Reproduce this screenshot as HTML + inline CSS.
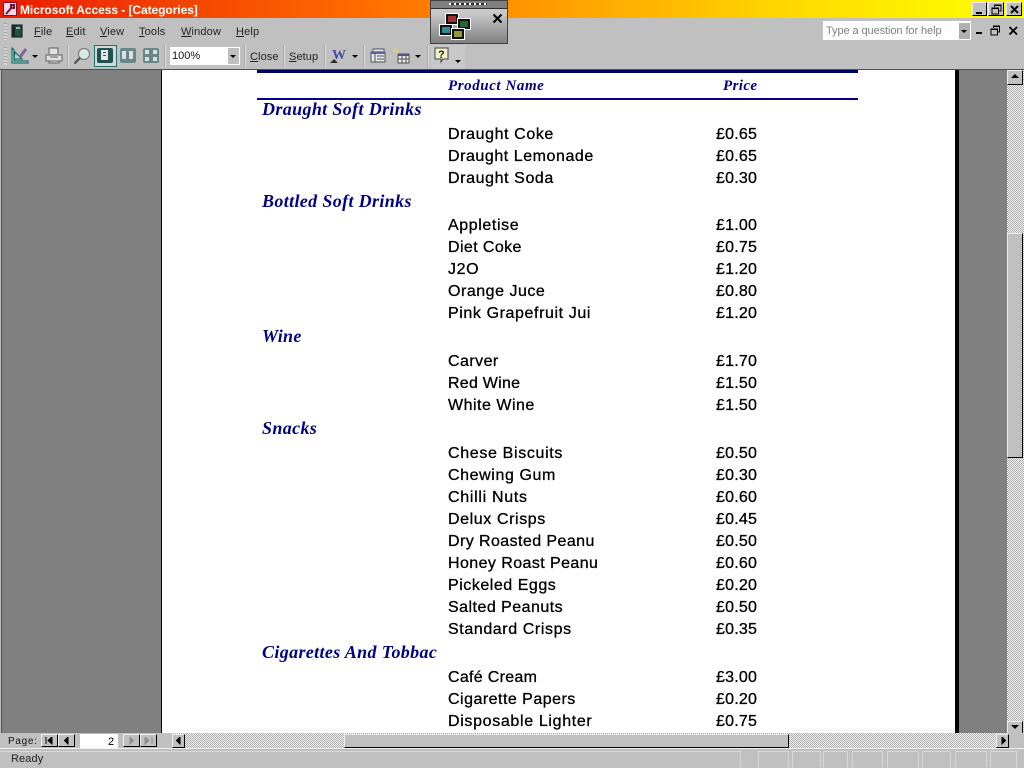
<!DOCTYPE html>
<html><head><meta charset="utf-8"><style>
html,body{margin:0;padding:0;width:1024px;height:768px;overflow:hidden;background:#c0c0c0}
body{position:relative;font-family:"Liberation Sans",sans-serif}
.a{position:absolute}
.t{position:absolute;white-space:nowrap;line-height:1}
.i{font:16px "Liberation Sans",sans-serif;color:#000;letter-spacing:.6px;left:448px;-webkit-text-stroke:.3px #000}
.p{font:16px "Liberation Sans",sans-serif;color:#000;letter-spacing:.2px;left:716px;-webkit-text-stroke:.3px #000}
.h{font:italic bold 18px "Liberation Serif",serif;color:#000080;left:262px;letter-spacing:.36px;margin-top:-1px}
.m{font:11px "Liberation Sans",sans-serif;color:#222;top:26px;letter-spacing:.15px}
.m u,.b u{text-decoration:underline}
.b{font:11px "Liberation Sans",sans-serif;color:#222;top:51px;letter-spacing:.1px}
.sep{position:absolute;top:45px;width:1px;height:22px;background:#a8a8a8;box-shadow:1px 0 #dcdcdc}
.btn{position:absolute;background:#c0c0c0;border:1px solid;border-color:#eee #000 #000 #eee;box-sizing:border-box}
.dither{background-color:#e0e0e0;background-image:repeating-conic-gradient(#b0b0b0 0 25%,#f0f0f0 0 50%);background-size:2px 2px}
.st{position:absolute;top:751px;height:17px;border:1px solid;border-color:#d8d8d8 #d8d8d8 transparent transparent;box-sizing:border-box}
.v{position:absolute;background:#d8e0e0}
</style></head><body>

<div class="a" style="left:0;top:0;width:1024px;height:18px;background:linear-gradient(90deg,#e81c00 0,#ff6a00 35%,#ffa800 58%,#ffe000 80%,#ffff00 100%)"></div>
<svg class="a" style="left:3px;top:2px" width="14" height="14"><rect width="14" height="14" fill="#801030"/><rect x="1" y="1" width="12" height="12" fill="#f4d8e8"/><path d="M3 12 L9 5 M8 3 h3 v3 h-3z" stroke="#801030" stroke-width="2" fill="none"/></svg>
<div class="t" style="left:20px;top:3px;font:bold 12px 'Liberation Sans',sans-serif;color:#fff;letter-spacing:-.06px">Microsoft Access - [Categories]</div>
<div class="btn" style="left:972px;top:2px;width:15px;height:14px"><div class="a" style="left:3px;top:9px;width:6px;height:2px;background:#000"></div></div>
<div class="btn" style="left:988px;top:2px;width:16px;height:14px"><svg class="a" style="left:2px;top:1px" width="11" height="11"><path d="M3.500 3V1H10V7H7.500M1 4H7.500V10H1Z M3 1.500H10 M1 4.500H7.500" stroke="#000" fill="none"/></svg></div>
<div class="btn" style="left:1006px;top:2px;width:16px;height:14px"><svg class="a" style="left:2px;top:1px" width="11" height="11"><path d="M2 2L9 9M9 2L2 9" stroke="#000" stroke-width="2" fill="none"/></svg></div>

<div class="a" style="left:0;top:18px;width:1024px;height:51px;background:#c0c0c0"></div>
<div class="a" style="left:4px;top:23px;width:3px;height:17px;background:repeating-linear-gradient(#a8a8a8 0 1px,#d4d4d4 1px 3px)"></div>
<div class="a" style="left:4px;top:47px;width:3px;height:18px;background:repeating-linear-gradient(#a8a8a8 0 1px,#d4d4d4 1px 3px)"></div>
<svg class="a" style="left:11px;top:24px" width="12" height="14"><rect x="1" y="1" width="10" height="12" fill="#205040" stroke="#101010"/><path d="M3 2V12" stroke="#000"/><rect x="5" y="3" width="4" height="2" fill="#80c0a0"/></svg>
<div class="t m" style="left:34px"><u>F</u>ile</div>
<div class="t m" style="left:66px"><u>E</u>dit</div>
<div class="t m" style="left:100px"><u>V</u>iew</div>
<div class="t m" style="left:139px"><u>T</u>ools</div>
<div class="t m" style="left:181px"><u>W</u>indow</div>
<div class="t m" style="left:236px"><u>H</u>elp</div>

<div class="a" style="left:823px;top:21px;width:148px;height:19px;background:#fff"></div>
<div class="a" style="left:959px;top:23px;width:11px;height:16px;background:#b0b0b0"></div>
<div class="a" style="left:961px;top:30px;border:3px solid transparent;border-top:3px solid #000"></div>
<div class="t" style="left:826px;top:25px;font:11px 'Liberation Sans',sans-serif;color:#808080;letter-spacing:-.08px">Type a question for help</div>
<div class="a" style="left:976px;top:32px;width:6px;height:2px;background:#000"></div>
<svg class="a" style="left:990px;top:25px" width="11" height="11"><path d="M3.500 3V1H9.500V7H7.500M1 4H7.500V10H1Z M3 1.500H10 M1 4.500H7.500" stroke="#000" fill="none"/></svg>
<svg class="a" style="left:1008px;top:25px" width="11" height="11"><path d="M1.500 2L9 9.500M9 2L1.500 9.500" stroke="#000" stroke-width="1.800" fill="none"/></svg>

<svg class="a" style="left:11px;top:47px" width="18" height="18"><path d="M1 16H17V14H3V3L1 1Z M3 12L11 12 4 5Z" fill="#a8d8c8" stroke="#006060"/><path d="M9 10L15 2" stroke="#8060a0" stroke-width="3"/></svg>
<div class="a" style="left:32px;top:55px;border:3px solid transparent;border-top:3px solid #000"></div>
<svg class="a" style="left:45px;top:47px" width="18" height="17"><path d="M4 7V1H13V7M1 8H17V14H1ZM4 14V16H14V14M5 10H13" stroke="#606060" fill="#e0e0e0"/></svg>
<div class="sep" style="left:67px"></div>
<svg class="a" style="left:73px;top:47px" width="18" height="18"><circle cx="11" cy="7" r="5.500" fill="#d8e8e8" stroke="#707070"/><path d="M7 11L1.500 16.500" stroke="#505050" stroke-width="2.200"/></svg>

<div class="a" style="left:94px;top:45px;width:23px;height:22px;background:#d4d8d4;border:1px solid #207070;box-sizing:border-box"></div>
<div class="a" style="left:97px;top:48px;width:16px;height:15px;background:#205050;border-radius:2px"></div>
<div class="a" style="left:101px;top:50px;width:7px;height:10px;background:#e8e8e8"></div>
<div class="a" style="left:103px;top:52px;width:3px;height:1px;background:#206060"></div>
<div class="a" style="left:103px;top:55px;width:3px;height:1px;background:#206060"></div>

<div class="a" style="left:120px;top:48px;width:16px;height:15px;background:#688888;border-radius:2px"></div>
<div class="v" style="left:122px;top:51px;width:4px;height:8px"></div>
<div class="v" style="left:129px;top:51px;width:4px;height:8px"></div>
<div class="a" style="left:143px;top:48px;width:16px;height:15px;background:#688888;border-radius:2px"></div>
<div class="v" style="left:145px;top:50px;width:4px;height:4px"></div>
<div class="v" style="left:153px;top:50px;width:4px;height:4px"></div>
<div class="v" style="left:145px;top:57px;width:4px;height:4px"></div>
<div class="v" style="left:153px;top:57px;width:4px;height:4px"></div>
<div class="sep" style="left:164px"></div>
<div class="a" style="left:170px;top:47px;width:70px;height:18px;background:#fff"></div>
<div class="a" style="left:228px;top:48px;width:11px;height:16px;background:#c0c0c0"></div>
<div class="a" style="left:230px;top:55px;border:3px solid transparent;border-top:3px solid #000"></div>
<div class="t" style="left:172px;top:50px;font:11px 'Liberation Sans',sans-serif;color:#111">100%</div>
<div class="sep" style="left:244px"></div>
<div class="t b" style="left:250px"><u>C</u>lose</div>
<div class="sep" style="left:283px"></div>
<div class="t b" style="left:289px"><u>S</u>etup</div>
<div class="sep" style="left:324px"></div>
<div class="t" style="left:332px;top:48px;font:bold 14px 'Liberation Serif',serif;color:#4848a0">W</div>
<div class="a" style="left:330px;top:59px;border:4px solid transparent;border-top:0;border-bottom:4px solid #303030"></div>
<div class="a" style="left:352px;top:55px;border:3px solid transparent;border-top:3px solid #000"></div>
<div class="sep" style="left:363px"></div>
<svg class="a" style="left:370px;top:48px" width="16" height="16"><path d="M3 3V1H14V3M1 4H15V14H1Z" fill="#e8e8e8" stroke="#505060"/><path d="M1 4H15V6H1Z" fill="#6060a0"/><path d="M7 8H14M7 11H14M5 6V14" stroke="#505060"/></svg>
<svg class="a" style="left:393px;top:47px" width="17" height="17"><path d="M3 1V7M0 4H6M1 2L5 6M5 2L1 6" stroke="#d8d080"/><path d="M5 7H16V16H5Z" fill="#e8e8e8" stroke="#505050"/><path d="M5 7H16V9H5Z" fill="#505090"/><path d="M5 12H16M9 9V16M13 9V16" stroke="#505050"/></svg>
<div class="a" style="left:415px;top:55px;border:3px solid transparent;border-top:3px solid #000"></div>
<div class="sep" style="left:427px"></div>
<div class="a" style="left:431px;top:45px;width:34px;height:23px;background:#c8c8c8"></div>
<svg class="a" style="left:434px;top:47px" width="15" height="17"><path d="M1 1H14V12H9L7 15V12H1Z" fill="#f4f4c8" stroke="#404040"/></svg>
<div class="t" style="left:438px;top:49px;font:bold 11px 'Liberation Sans',sans-serif;color:#222">?</div>
<div class="a" style="left:455px;top:60px;border:3px solid transparent;border-top:3px solid #000"></div>

<div class="a" style="left:430px;top:0;width:78px;height:44px;background:linear-gradient(#cfcfcf 0,#c8c8c8 30%,#808080 100%);border:1px solid #404040;box-sizing:border-box"></div>
<div class="a" style="left:431px;top:1px;width:76px;height:8px;background:#808080;border-bottom:1px solid #303030;box-sizing:border-box"></div>
<div class="a" style="left:449px;top:3px;width:38px;height:2px;background:repeating-linear-gradient(90deg,#fff 0 2px,#303030 2px 5px)"></div>
<svg class="a" style="left:439px;top:13px" width="34" height="27">
<g stroke="#fff"><rect x="6.500" y=".5" width="13" height="11" fill="#101010"/><rect x="18.500" y="5.500" width="13" height="11" fill="#101010"/><rect x=".5" y="11.500" width="13" height="11" fill="#101010"/><rect x="12.500" y="15.500" width="13" height="11" fill="#101010"/></g>
<rect x="9" y="3" width="8" height="6" fill="#a03030"/><rect x="21" y="8" width="8" height="6" fill="#206830"/><rect x="3" y="14" width="8" height="6" fill="#308898"/><rect x="15" y="18" width="8" height="6" fill="#909840"/></svg>
<svg class="a" style="left:492px;top:13px" width="11" height="11"><path d="M1.500 1.500L9.500 9.500M9.500 1.500L1.500 9.500" stroke="#000" stroke-width="2"/></svg>

<div class="a" style="left:0;top:69px;width:1024px;height:1px;background:#505050"></div>
<div class="a" style="left:0;top:70px;width:2px;height:663px;background:#c0c0c0"></div>
<div class="a" style="left:1px;top:70px;width:1px;height:663px;background:#505050"></div>
<div class="a" style="left:2px;top:70px;width:160px;height:663px;background:#808080"></div>
<div class="a" style="left:161px;top:70px;width:1px;height:663px;background:#000"></div>
<div class="a" style="left:162px;top:70px;width:793px;height:663px;background:#fff"></div>
<div class="a" style="left:955px;top:70px;width:4px;height:663px;background:#000"></div>
<div class="a" style="left:959px;top:70px;width:48px;height:663px;background:#808080"></div>
<div class="a" style="left:257px;top:70px;width:601px;height:3px;background:#000060"></div>
<div class="a" style="left:257px;top:98px;width:601px;height:2px;background:#000080"></div>

<div class="t" style="left:448px;top:78px;font:italic bold 15px 'Liberation Serif',serif;color:#000080;letter-spacing:.57px">Product Name</div>
<div class="t" style="left:723px;top:78px;font:italic bold 15px 'Liberation Serif',serif;color:#000080;letter-spacing:.4px">Price</div>

<div class="t h" style="top:100px">Draught Soft Drinks</div>
<div class="t i" style="top:126px">Draught Coke</div><div class="t p" style="top:126px">£0.65</div>
<div class="t i" style="top:148px;letter-spacing:.55px">Draught Lemonade</div><div class="t p" style="top:148px">£0.65</div>
<div class="t i" style="top:170px">Draught Soda</div><div class="t p" style="top:170px">£0.30</div>
<div class="t h" style="top:192px">Bottled Soft Drinks</div>
<div class="t i" style="top:217px">Appletise</div><div class="t p" style="top:217px">£1.00</div>
<div class="t i" style="top:239px;letter-spacing:.4px">Diet Coke</div><div class="t p" style="top:239px">£0.75</div>
<div class="t i" style="top:261px">J2O</div><div class="t p" style="top:261px">£1.20</div>
<div class="t i" style="top:283px;letter-spacing:.52px">Orange Juce</div><div class="t p" style="top:283px">£0.80</div>
<div class="t i" style="top:305px">Pink Grapefruit Jui</div><div class="t p" style="top:305px">£1.20</div>
<div class="t h" style="top:327px">Wine</div>
<div class="t i" style="top:353px;letter-spacing:.45px">Carver</div><div class="t p" style="top:353px">£1.70</div>
<div class="t i" style="top:375px;letter-spacing:.25px">Red Wine</div><div class="t p" style="top:375px">£1.50</div>
<div class="t i" style="top:397px;letter-spacing:.5px">White Wine</div><div class="t p" style="top:397px">£1.50</div>
<div class="t h" style="top:419px">Snacks</div>
<div class="t i" style="top:445px;letter-spacing:.66px">Chese Biscuits</div><div class="t p" style="top:445px">£0.50</div>
<div class="t i" style="top:467px">Chewing Gum</div><div class="t p" style="top:467px">£0.30</div>
<div class="t i" style="top:489px;letter-spacing:.7px">Chilli Nuts</div><div class="t p" style="top:489px">£0.60</div>
<div class="t i" style="top:511px">Delux Crisps</div><div class="t p" style="top:511px">£0.45</div>
<div class="t i" style="top:533px;letter-spacing:.42px">Dry Roasted Peanu</div><div class="t p" style="top:533px">£0.50</div>
<div class="t i" style="top:555px;letter-spacing:.42px">Honey Roast Peanu</div><div class="t p" style="top:555px">£0.60</div>
<div class="t i" style="top:577px;letter-spacing:.53px">Pickeled Eggs</div><div class="t p" style="top:577px">£0.20</div>
<div class="t i" style="top:599px;letter-spacing:.47px">Salted Peanuts</div><div class="t p" style="top:599px">£0.50</div>
<div class="t i" style="top:621px">Standard Crisps</div><div class="t p" style="top:621px">£0.35</div>
<div class="t h" style="top:643px">Cigarettes And Tobbac</div>
<div class="t i" style="top:669px;letter-spacing:.3px">Café Cream</div><div class="t p" style="top:669px">£3.00</div>
<div class="t i" style="top:691px;letter-spacing:.48px">Cigarette Papers</div><div class="t p" style="top:691px">£0.20</div>
<div class="t i" style="top:713px;letter-spacing:.66px">Disposable Lighter</div><div class="t p" style="top:713px">£0.75</div>

<div class="a dither" style="left:1007px;top:70px;width:17px;height:663px"></div>
<div class="btn" style="left:1007px;top:70px;width:16px;height:15px"><div class="a" style="left:3px;top:3px;border:4px solid transparent;border-top:0;border-bottom:4px solid #000"></div></div>
<div class="btn" style="left:1007px;top:233px;width:16px;height:225px"></div>
<div class="btn" style="left:1007px;top:721px;width:16px;height:13px"><div class="a" style="left:3px;top:3px;border:4px solid transparent;border-bottom:0;border-top:4px solid #000"></div></div>

<div class="a" style="left:0;top:733px;width:1024px;height:15px;background:#c0c0c0"></div>
<div class="a dither" style="left:172px;top:733px;width:835px;height:15px"></div>
<div class="t" style="left:8px;top:736px;font:10px 'Liberation Sans',sans-serif;color:#111;letter-spacing:.7px">Page:</div>
<div class="btn" style="left:41px;top:734px;width:17px;height:13px"><svg class="a" style="left:3px;top:2px" width="10" height="8"><path d="M1 0V7M7 0V7L3 3.500Z" stroke="#000" fill="#000"/></svg></div>
<div class="btn" style="left:58px;top:734px;width:17px;height:13px"><svg class="a" style="left:3px;top:2px" width="10" height="8"><path d="M6 0V7L2.500 3.500Z" stroke="#000" fill="#000"/></svg></div>
<div class="a" style="left:80px;top:734px;width:38px;height:14px;background:#fff"></div>
<div class="t" style="left:108px;top:736px;font:11px 'Liberation Sans',sans-serif;color:#000">2</div>
<div class="btn" style="left:123px;top:734px;width:17px;height:13px"><svg class="a" style="left:4px;top:2px" width="10" height="8"><path d="M2 0V7L5.500 3.500Z" stroke="#909090" fill="#909090"/></svg></div>
<div class="btn" style="left:140px;top:734px;width:17px;height:13px"><svg class="a" style="left:3px;top:2px" width="10" height="8"><path d="M1 0V7L5 3.500ZM8 0V7" stroke="#909090" fill="#909090"/></svg></div>
<div class="btn" style="left:172px;top:734px;width:13px;height:14px"><svg class="a" style="left:2px;top:2px" width="8" height="8"><path d="M5 0V7L1.500 3.500Z" stroke="#000" fill="#000"/></svg></div>
<div class="btn" style="left:344px;top:734px;width:445px;height:14px;border-top-color:#e8e8e8"></div>
<div class="btn" style="left:996px;top:734px;width:13px;height:14px"><svg class="a" style="left:3px;top:2px" width="8" height="8"><path d="M2 0V7L5.500 3.500Z" stroke="#000" fill="#000"/></svg></div>

<div class="a" style="left:0;top:748px;width:1024px;height:1px;background:#f0f0f0"></div>
<div class="a" style="left:0;top:749px;width:1024px;height:19px;background:#c0c0c0"></div>
<div class="t" style="left:11px;top:753px;font:11px 'Liberation Sans',sans-serif;color:#222;letter-spacing:.1px">Ready</div>
<div class="st" style="left:0;width:741px"></div>
<div class="st" style="left:758px;width:31px;border-left-color:#d8d8d8"></div>
<div class="st" style="left:792px;width:29px;border-left-color:#d8d8d8"></div>
<div class="st" style="left:823px;width:25px;border-left-color:#d8d8d8"></div>
<div class="st" style="left:852px;width:31px;border-left-color:#d8d8d8"></div>
<div class="st" style="left:887px;width:32px;border-left-color:#d8d8d8"></div>
<div class="st" style="left:922px;width:29px;border-left-color:#d8d8d8"></div>
<div class="st" style="left:955px;width:32px;border-left-color:#d8d8d8"></div>
<div class="st" style="left:990px;width:27px;border-left-color:#d8d8d8"></div>
</body></html>
